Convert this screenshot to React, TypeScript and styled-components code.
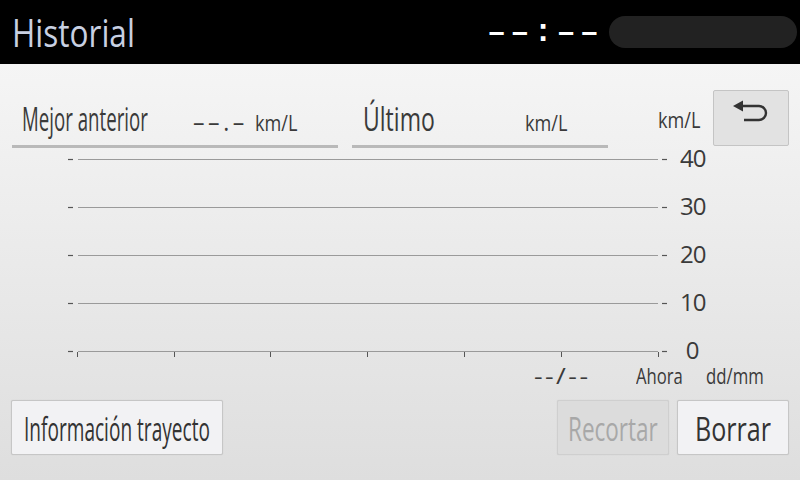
import React, { useLayoutEffect, useRef, useState } from "react";
import styled, { createGlobalStyle } from "styled-components";

const Global = createGlobalStyle`
  html, body { margin: 0; padding: 0; }
  body { width: 800px; height: 480px; overflow: hidden; font-family: "Open Sans", "DejaVu Sans", sans-serif; }
`;

/* Fit: squeezes a single-line text horizontally to the target width (the display font is condensed). */
const FitBox = styled.span<{ $w: number; $size: number; $lh?: number; $ls?: number }>`
  display: inline-block;
  width: ${(p) => p.$w}px;
  font-size: ${(p) => p.$size}px;
  line-height: ${(p) => (p.$lh ? `${p.$lh}px` : "1")};
  letter-spacing: ${(p) => p.$ls ?? 0}px;
  white-space: nowrap;
  flex: none;
`;

const FitInner = styled.span`
  display: inline-block;
  transform-origin: left center;
`;

function Fit({
  w,
  size,
  lh,
  ls,
  children,
}: {
  w: number;
  size: number;
  lh?: number;
  ls?: number;
  children: React.ReactNode;
}) {
  const ref = useRef<HTMLSpanElement>(null);
  const [s, setS] = useState(1);
  useLayoutEffect(() => {
    if (ref.current && ref.current.offsetWidth > 0) setS(w / ref.current.offsetWidth);
  }, [w, children]);
  return (
    <FitBox $w={w} $size={size} $lh={lh} $ls={ls}>
      <FitInner ref={ref} style={{ transform: `scaleX(${s})` }}>
        {children}
      </FitInner>
    </FitBox>
  );
}

const Screen = styled.div`
  width: 800px;
  height: 480px;
  display: flex;
  flex-direction: column;
`;

const Header = styled.header`
  height: 64px;
  background: #000;
  display: flex;
  align-items: center;
  padding: 0 3px 0 12px;
  box-sizing: border-box;
  flex: none;
`;

const Title = styled.h1`
  margin: 0 0 1px 0;
  flex: 1;
  font-weight: 400;
  color: #c8d0e2;
  display: flex;
`;

const Clock = styled.div`
  font-family: "Liberation Mono", monospace;
  font-size: 32px;
  font-weight: 700;
  color: #fff;
  letter-spacing: 4px;
  margin-right: 6px;
`;

const Pill = styled.div`
  width: 188px;
  height: 32px;
  border-radius: 16px;
  background: #222;
`;

const Body = styled.main`
  flex: 1;
  background: linear-gradient(#f5f5f5, #dedede);
  padding: 26px 11px 0 11px;
  display: flex;
  flex-direction: column;
  color: #3a3a3a;
`;

const TopRow = styled.div`
  display: flex;
  align-items: flex-start;
  height: 58px;
`;

const Field = styled.div<{ $w: number; $ml: number; $pl: number }>`
  width: ${(p) => p.$w}px;
  margin-left: ${(p) => p.$ml}px;
  height: 58px;
  box-sizing: border-box;
  border-bottom: 3px solid #b9b9b9;
  display: flex;
  align-items: baseline;
  padding: 13px 0 0 ${(p) => p.$pl}px;
`;

const Gap = styled.span<{ $w: number }>`
  width: ${(p) => p.$w}px;
  flex: none;
`;

const AxisUnit = styled.div`
  margin: 13px 0 0 50px;
  display: flex;
  align-items: baseline;
  height: 32px;
`;

const IconButton = styled.button`
  width: 76px;
  height: 56px;
  margin-left: 13px;
  background: #e2e2e2;
  border: 1px solid #c4c4c4;
  border-radius: 2px;
  display: flex;
  align-items: center;
  justify-content: center;
  padding: 0 0 12px 0;
`;

const ChartRow = styled.div`
  display: flex;
  height: 214px;
`;

const Plot = styled.svg`
  width: 661px;
  height: 214px;
  display: block;
  flex: none;
`;

const YLabels = styled.div`
  display: flex;
  flex-direction: column;
  width: 24px;
  margin: -14px 0 0 8px;
`;

const YLabel = styled.span`
  height: 48px;
  line-height: 48px;
  font-size: 24px;
  letter-spacing: -1px;
  text-align: center;
`;

const XLabels = styled.div`
  display: flex;
  height: 28px;
  align-items: baseline;
  margin-top: -1px;
`;

const XSpace = styled.span<{ $ml: number }>`
  margin-left: ${(p) => p.$ml}px;
`;

const ButtonRow = styled.div`
  display: flex;
  margin-top: 11px;
  gap: 8px;
`;

const Button = styled.button<{ $w: number; $disabled?: boolean }>`
  width: ${(p) => p.$w}px;
  height: 55px;
  box-sizing: border-box;
  border: 1px solid ${(p) => (p.$disabled ? "#cfcfcf" : "#c6c6c6")};
  border-radius: 2px;
  background: ${(p) => (p.$disabled ? "#dcdcdc" : "#f2f2f4")};
  color: ${(p) => (p.$disabled ? "#a8a8a8" : "#333")};
  font-family: "Open Sans", sans-serif;
  display: flex;
  align-items: center;
  justify-content: center;
  padding: 3px 0 0 0;
  box-shadow: 0 0 1px rgba(0, 0, 0, 0.15);
`;

const Spacer = styled.div`
  flex: 1;
`;

const gridY = [11, 59, 107, 155, 203];
const tickX = [66, 163, 259, 356, 453, 550, 647];

export default function App() {
  return (
    <Screen>
      <Global />
      <Header>
        <Title>
          <Fit w={123} size={39}>Historial</Fit>
        </Title>
        <Clock>––:––</Clock>
        <Pill />
      </Header>
      <Body>
        <TopRow>
          <Field $w={326} $ml={1} $pl={10}>
            <Fit w={126} size={32}>Mejor anterior</Fit>
            <Gap $w={45} />
            <Fit w={55} size={26} ls={4}>––.–</Fit>
            <Gap $w={7} />
            <Fit w={42} size={22}>km/L</Fit>
          </Field>
          <Field $w={256} $ml={14} $pl={11}>
            <Fit w={72} size={32}>Último</Fit>
            <Gap $w={90} />
            <Fit w={42} size={22}>km/L</Fit>
          </Field>
          <AxisUnit>
            <Fit w={42} size={22} lh={32}>km/L</Fit>
          </AxisUnit>
          <IconButton aria-label="Volver">
            <svg width="36" height="24" viewBox="0 0 36 24">
              <polygon points="0,6 10,0.5 10,11.5" fill="#333" />
              <path d="M9 6 H26 A7 7 0 0 1 26 20 H11" fill="none" stroke="#333" strokeWidth="2.4" />
            </svg>
          </IconButton>
        </TopRow>
        <ChartRow>
          <Plot viewBox="0 0 661 214">
            {gridY.map((y) => (
              <g key={y}>
                <line x1={67} x2={647} y1={y + 0.5} y2={y + 0.5} stroke="#9a9a9a" strokeWidth={1} />
                <line x1={57} x2={62} y1={y + 0.5} y2={y + 0.5} stroke="#555" strokeWidth={1.2} />
                <line x1={651} x2={656} y1={y + 0.5} y2={y + 0.5} stroke="#555" strokeWidth={1.2} />
              </g>
            ))}
            {tickX.map((x) => (
              <line key={x} x1={x + 0.5} x2={x + 0.5} y1={204} y2={209} stroke="#555" strokeWidth={1} />
            ))}
          </Plot>
          <YLabels>
            <YLabel>40</YLabel>
            <YLabel>30</YLabel>
            <YLabel>20</YLabel>
            <YLabel>10</YLabel>
            <YLabel>0</YLabel>
          </YLabels>
        </ChartRow>
        <XLabels>
          <XSpace $ml={523} />
          <Fit w={56} size={22} lh={28} ls={2}>--/--</Fit>
          <XSpace $ml={46} />
          <Fit w={47} size={22} lh={28}>Ahora</Fit>
          <XSpace $ml={23} />
          <Fit w={58} size={22} lh={28}>dd/mm</Fit>
        </XLabels>
        <ButtonRow>
          <Button $w={212}>
            <Fit w={186} size={32}>Información trayecto</Fit>
          </Button>
          <Spacer />
          <Button $w={112} $disabled>
            <Fit w={90} size={32}>Recortar</Fit>
          </Button>
          <Button $w={112}>
            <Fit w={76} size={32}>Borrar</Fit>
          </Button>
        </ButtonRow>
      </Body>
    </Screen>
  );
}
